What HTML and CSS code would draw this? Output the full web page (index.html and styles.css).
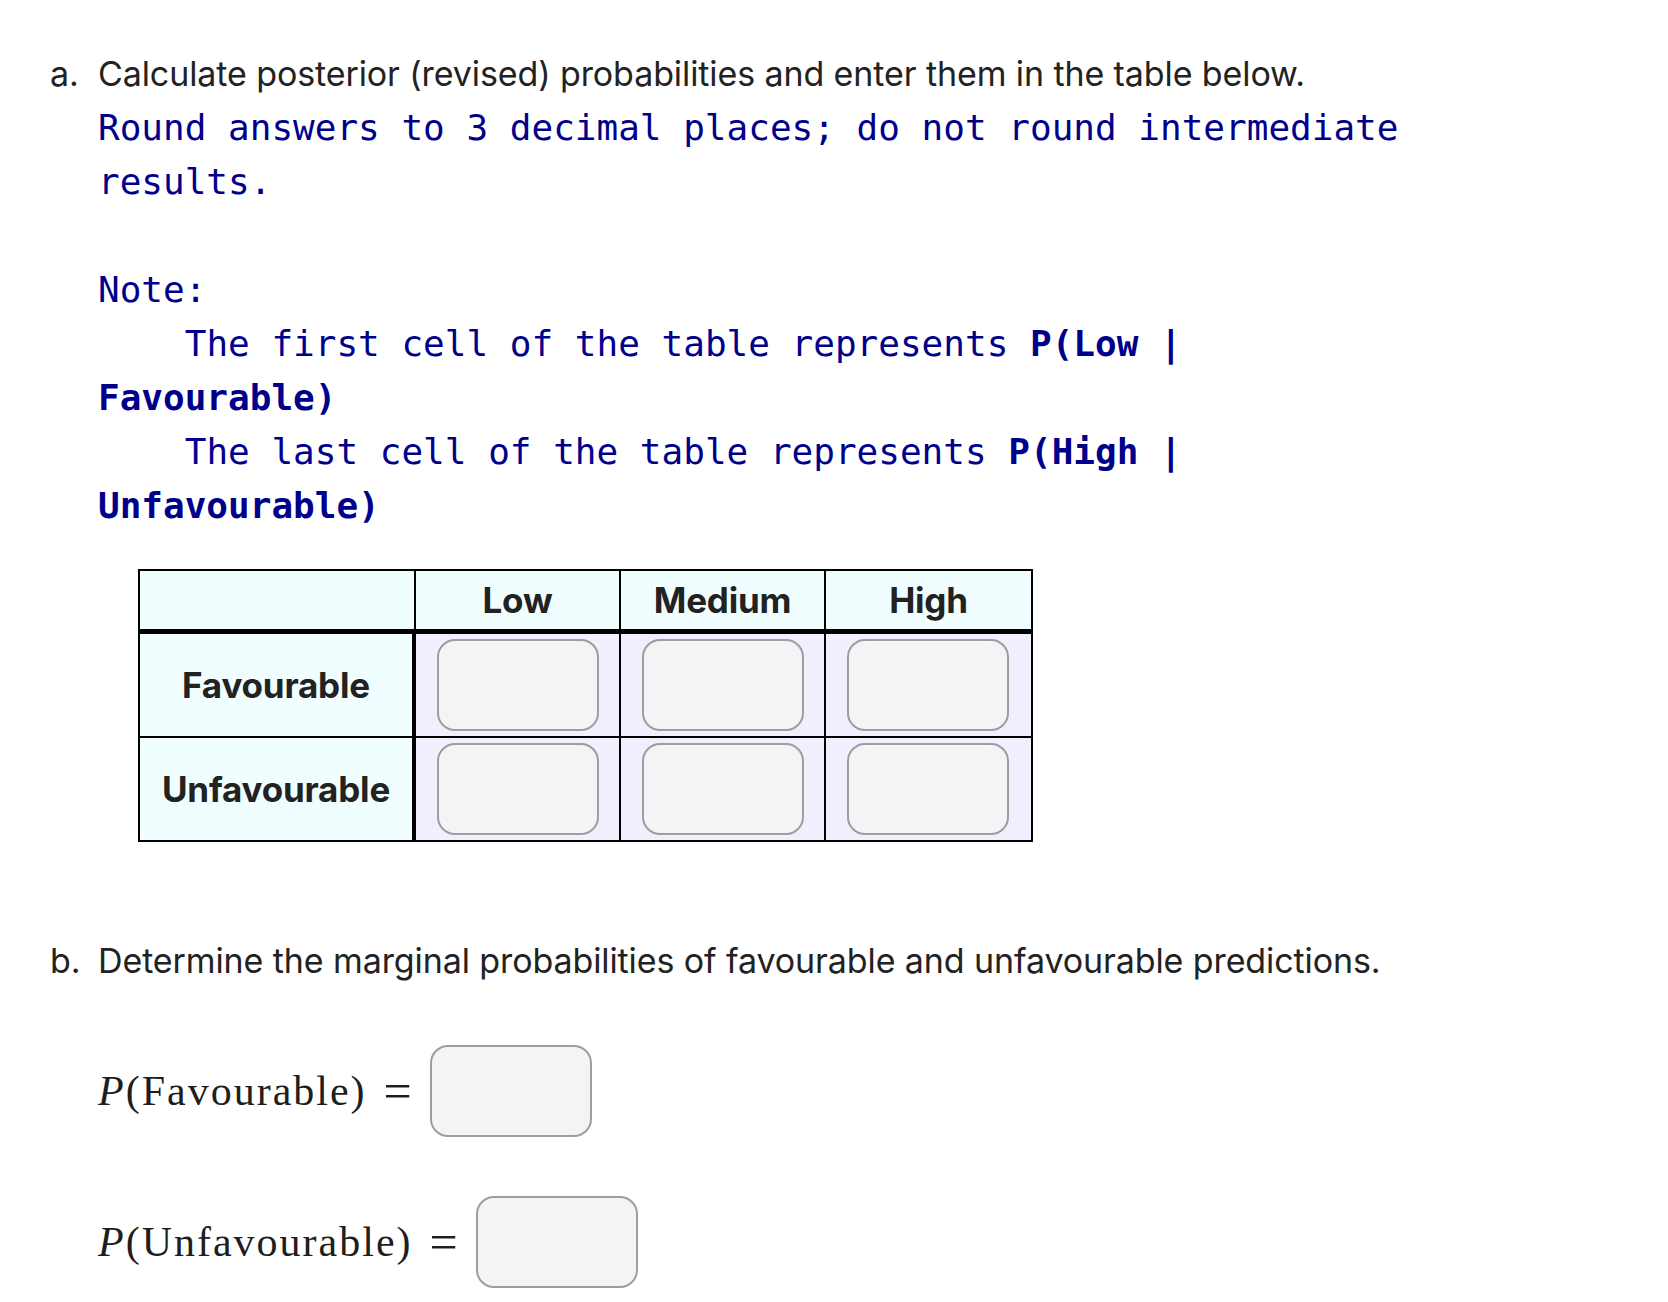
FILE: index.html
```html
<!DOCTYPE html>
<html lang="en">
<head>
<meta charset="utf-8">
<title>Posterior probabilities</title>
<link rel="stylesheet" href="styles.css">
</head>
<body>
<main class="page">
  <section class="part part-a">
    <span class="part-label">a.</span>
    <div class="part-body">
      <p class="prompt">Calculate posterior (revised) probabilities and enter them in the table below.</p>
<pre class="note">Round answers to 3 decimal places; do not round intermediate results.

Note:
    The first cell of the table represents <b>P(Low |</b> <b>Favourable)</b>
    The last cell of the table represents <b>P(High |</b> <b>Unfavourable)</b></pre>
      <table class="grid">
        <colgroup>
          <col class="col-label">
          <col class="col-val">
          <col class="col-val">
          <col class="col-val">
        </colgroup>
        <thead>
          <tr>
            <th class="corner"></th>
            <th class="head">Low</th>
            <th class="head">Medium</th>
            <th class="head last">High</th>
          </tr>
        </thead>
        <tbody>
          <tr class="row-first">
            <th class="row-label">Favourable</th>
            <td class="cell"><input class="answer" type="text" aria-label="P(Low | Favourable)"></td>
            <td class="cell"><input class="answer" type="text" aria-label="P(Medium | Favourable)"></td>
            <td class="cell last"><input class="answer" type="text" aria-label="P(High | Favourable)"></td>
          </tr>
          <tr>
            <th class="row-label">Unfavourable</th>
            <td class="cell"><input class="answer" type="text" aria-label="P(Low | Unfavourable)"></td>
            <td class="cell"><input class="answer" type="text" aria-label="P(Medium | Unfavourable)"></td>
            <td class="cell last"><input class="answer" type="text" aria-label="P(High | Unfavourable)"></td>
          </tr>
        </tbody>
      </table>
    </div>
  </section>

  <section class="part part-b">
    <span class="part-label">b.</span>
    <div class="part-body">
      <p class="prompt">Determine the marginal probabilities of favourable and unfavourable predictions.</p>
      <div class="math-row first">
        <span class="math"><i class="var">P</i>(Favourable)</span>
        <span class="eq">=</span>
        <input class="answer" type="text" aria-label="P(Favourable)">
      </div>
      <div class="math-row">
        <span class="math"><i class="var">P</i>(Unfavourable)</span>
        <span class="eq">=</span>
        <input class="answer" type="text" aria-label="P(Unfavourable)">
      </div>
    </div>
  </section>
</main>
</body>
</html>
```

FILE: styles.css
```css
* {
  box-sizing: border-box;
}

html, body {
  margin: 0;
  padding: 0;
  background: #ffffff;
}

body {
  font-family: Inter, "Liberation Sans", sans-serif;
  color: #222222;
}

.page {
  padding: 50px 0 0 50px;
}

.part {
  display: flex;
  align-items: flex-start;
}

.part-b {
  margin-top: 95px;
}

.part-label {
  width: 48px;
  flex: none;
  font-size: 34px;
  line-height: 48px;
}

.part-body {
  flex: 1;
  min-width: 0;
}

.prompt {
  margin: 0;
  font-size: 34px;
  line-height: 48px;
  letter-spacing: -0.1px;
}

.note {
  margin: 3px 0 0 0;
  width: 1320px;
  font-family: "DejaVu Sans Mono", "Liberation Mono", monospace;
  font-size: 36px;
  line-height: 54px;
  color: #00008b;
  white-space: pre-wrap;
}

.note b {
  font-weight: bold;
}

/* table */
.grid {
  margin: 36px 0 0 40px;
  border: 2px solid #000;
  border-collapse: separate;
  border-spacing: 0;
  table-layout: fixed;
  width: 893px;
}

.col-label {
  width: 276px;
}

.col-val {
  width: 205px;
}

.grid th {
  font-family: Inter, "Liberation Sans", sans-serif;
  font-weight: 700;
  font-size: 35px;
  letter-spacing: -0.2px;
  color: #222222;
  text-align: center;
  padding: 0;
}

.corner,
.head {
  background: #f0feff;
  height: 63px;
  line-height: 58px;
  border-bottom: 5px solid #000;
  border-right: 2px solid #000;
}

.head.last {
  border-right: 0;
}

.row-label {
  background: #f0feff;
  border-right: 4px solid #000;
}

.cell {
  background: #efeffd;
  padding: 5px 20px 5px 21px;
  border-right: 2px solid #000;
}

.cell.last {
  border-right: 0;
}

.row-first .row-label,
.row-first .cell {
  border-bottom: 2px solid #000;
}

.answer {
  display: block;
  width: 162px;
  height: 92px;
  margin: 0;
  padding: 0 10px;
  background: #f3f4f6;
  border: 2px solid #9e9e9e;
  border-radius: 18px;
  font-size: 28px;
  font-family: Inter, "Liberation Sans", sans-serif;
  outline: none;
}

/* part b math */
.math-row {
  display: flex;
  align-items: center;
  margin-top: 59px;
}

.math-row.first {
  margin-top: 60px;
}

.math {
  font-family: "Liberation Serif", "DejaVu Serif", serif;
  font-size: 42px;
  letter-spacing: 2px;
  color: #1e1e1e;
}

.var {
  font-style: italic;
}

.eq {
  font-family: "Liberation Serif", "DejaVu Serif", serif;
  font-size: 50px;
  line-height: 1;
  color: #1e1e1e;
  margin: 0 18px 0 17px;
}
```
